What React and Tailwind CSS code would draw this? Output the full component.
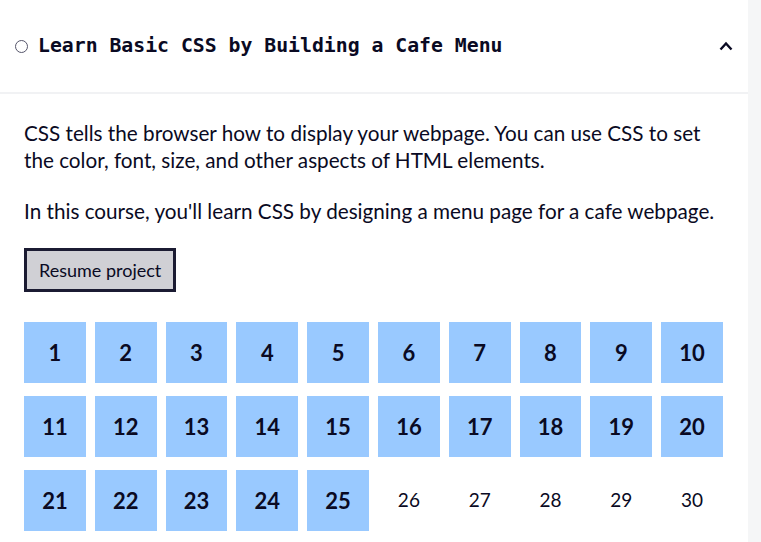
import { useState } from 'react';

const total = 30;
const done = 25;

export default function App() {
  const [open, setOpen] = useState(true);
  const steps = Array.from({ length: total }, (_, i) => i + 1);

  return (
    <div className="flex min-h-[542px] bg-[#f5f6f7] font-['Lato','Noto_Sans',sans-serif] text-[#0a0a23]">
      <div className="w-[748px] bg-white">
        <button
          type="button"
          onClick={() => setOpen((o) => !o)}
          className="flex h-[94px] w-full items-center border-b-2 border-[#f1f2f4] pl-[15px] pr-[15px] text-left"
        >
          <span className="mr-[10px] h-[13px] w-[13px] rounded-full border border-[#55556a]" />
          <span className="flex-1 font-['DejaVu_Sans_Mono',monospace] text-[19.8px] font-bold">
            Learn Basic CSS by Building a Cafe Menu
          </span>
          <svg viewBox="0 0 14 10" className="h-[10px] w-[14px]" fill="none" stroke="currentColor" strokeWidth="2.4">
            <path d="M1.5 8.5L7 2.5l5.5 6" />
          </svg>
        </button>

        {open && (
          <div className="px-6 pt-[26px]">
            <p className="text-[20.7px] leading-[27px]">
              CSS tells the browser how to display your webpage. You can use CSS to set the color, font, size, and other aspects of HTML elements.
            </p>
            <p className="mt-[24px] text-[20.7px] leading-[27px]">
              In this course, you'll learn CSS by designing a menu page for a cafe webpage.
            </p>
            <button
              type="button"
              className="mt-[23px] h-[44px] border-[3px] border-[#1b1b32] bg-[#d0d0d5] px-[12px] text-[18px]"
            >
              Resume project
            </button>
            <div className="mt-[30px] grid grid-cols-10 gap-x-[9px] gap-y-[13px] pr-[1px]">
              {steps.map((n) => (
                <div
                  key={n}
                  className={
                    n <= done
                      ? 'flex h-[61px] items-center justify-center bg-[#99c9ff] text-[22px] font-bold'
                      : 'flex h-[61px] items-center justify-center text-[19px]'
                  }
                >
                  {n}
                </div>
              ))}
            </div>
          </div>
        )}
      </div>
    </div>
  );
}
